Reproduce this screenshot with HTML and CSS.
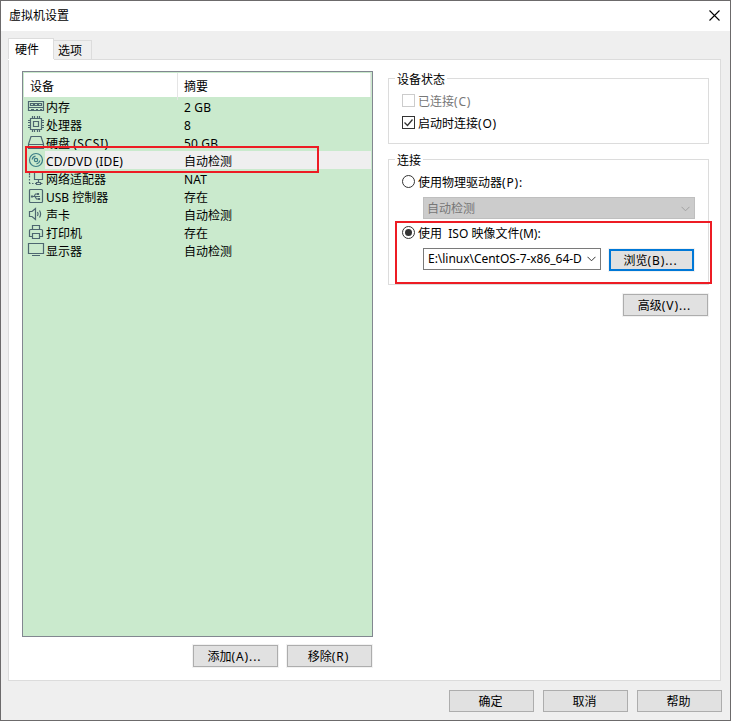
FILE: index.html
```html
<!DOCTYPE html>
<html lang="zh-CN">
<head>
<meta charset="utf-8">
<title>虚拟机设置</title>
<link rel="stylesheet" href="styles.css">
</head>
<body>
<div class="window">
  <header class="titlebar"><span>虚拟机设置</span>
    <svg class="close" width="11" height="11" viewBox="0 0 11 11"><path d="M.5.5l10 10M10.5.5l-10 10"/></svg>
  </header>
  <nav class="tabs"><div class="tab active">硬件</div><div class="tab">选项</div></nav>
  <main class="panel">
    <section class="left">
      <div class="list">
        <div class="head"><span>设备</span><span>摘要</span></div>
        <div class="row"><svg class="icon" viewBox="0 0 18 18"><path d="M1.500 4.500h15v9h-15zM3.500 6.500h3v2h-3zM7.500 6.500h3v2h-3zM11.500 6.500h3v2h-3zM2 10.500h14M4 12.500h3M9 12.500h2M13 12.500h2"/></svg><span class="name">内存</span><span class="w">2 GB</span></div>
        <div class="row"><svg class="icon" viewBox="0 0 18 18"><path d="M3.500 3.500h11v11h-11zM6.500 6.500h5v5h-5z"/><path d="M5.500 1v2M7.500 1v2M10.500 1v2M12.500 1v2M5.500 15v2M7.500 15v2M10.500 15v2M12.500 15v2M1 5.500h2M1 7.500h2M1 10.500h2M1 12.500h2M15 5.500h2M15 7.500h2M15 10.500h2M15 12.500h2"/></svg><span class="name">处理器</span><span>8</span></div>
        <div class="row"><svg class="icon" viewBox="0 0 18 18"><path d="M4 3.500h10l2.500 7.500v4.500h-15v-4.500zM1.500 11.500h15"/></svg><span class="name">硬盘 <i class="scsi">(SCSI)</i></span><span class="w">50 GB</span></div>
        <div class="row selected"><svg class="icon disc" viewBox="0 0 18 18"><circle cx="9" cy="9" r="6.500"/><circle cx="9" cy="9" r="1.700"/><path d="M5.200 8.500a4 4 0 0 1 3.300-3.300M12.800 9.500a4 4 0 0 1-3.300 3.300"/></svg><span class="name w">CD/DVD (IDE)</span><span>自动检测</span></div>
        <div class="row"><svg class="icon" viewBox="0 0 18 18"><path d="M7.500 3.500h8v7h-8zM11.500 11v2M9.500 13.500h4v2h-4z"/><path d="M7 3.500h-4.500v3"/><path stroke-dasharray="1.500 1.500" d="M2.500 7v7M2 14.500h7M14 14.500h3"/></svg><span class="name">网络适配器</span><span class="w">NAT</span></div>
        <div class="row"><svg class="icon" viewBox="0 0 18 18"><rect x="2.500" y="2.500" width="13" height="13" rx="1"/><path d="M5 9.500h8M7 9.500l1.500-2.500h2M8 9.500l1.500 2.500h2"/><path d="M4.500 9h1v1h-1zM10.500 6.500h1v1h-1zM11.500 11.500h1v1h-1z"/></svg><span class="name">USB 控制器</span><span>存在</span></div>
        <div class="row"><svg class="icon" viewBox="0 0 18 18"><path d="M2.500 6.500h2.500l3.500-3v11l-3.500-3h-2.500zM10.500 7q1.200 2 0 4M12.500 5.500q2.200 3.500 0 7"/></svg><span class="name">声卡</span><span>自动检测</span></div>
        <div class="row"><svg class="icon" viewBox="0 0 18 18"><path d="M5.500 6.500V2.500h7V6.500M5 13.500h-2.500v-6q0-1 1-1h11q1 0 1 1v6h-2.500M5.500 10.500h7v5h-7z"/></svg><span class="name">打印机</span><span>存在</span></div>
        <div class="row"><svg class="icon" viewBox="0 0 18 18"><path d="M1.500 2.500h15v10h-15zM5 14.500h8"/></svg><span class="name">显示器</span><span>自动检测</span></div>
      </div>
      <div class="actions"><button>添加<i>(A)...</i></button><button>移除<i>(R)</i></button></div>
    </section>
    <section class="right">
      <div class="group status">
        <span class="legend">设备状态</span>
        <div class="option disabled"><svg width="13" height="13"><rect x=".5" y=".5" width="12" height="12"/></svg><span>已连接<i class="o">(C)</i></span></div>
        <div class="option"><svg width="13" height="13"><rect x=".5" y=".5" width="12" height="12"/><path d="M2.500 6.500l3 3 5-6" stroke-width="1.300"/></svg><span>启动时连接<i class="o">(O)</i></span></div>
      </div>
      <div class="group connection">
        <span class="legend">连接</span>
        <div class="option"><svg width="13" height="13"><circle cx="6.500" cy="6.500" r="6"/></svg><span>使用物理驱动器<i class="o">(P):</i></span></div>
        <div class="combo off"><span>自动检测</span><svg width="9" height="6"><path d="M.5.8l4 4 4-4"/></svg></div>
        <div class="option iso"><svg width="13" height="13"><circle cx="6.500" cy="6.500" r="6"/><circle class="dot" cx="6.500" cy="6.500" r="3.500"/></svg><span>使用&nbsp; ISO 映像文件(M):</span></div>
        <div class="file"><div class="combo"><span class="path">E:\linux\CentOS-7-x86_64-D</span><svg width="9" height="6"><path d="M.5.8l4 4 4-4"/></svg></div><button class="focus">浏览<i>(B)...</i></button></div>
      </div>
      <button class="advanced">高级<i>(V)...</i></button>
    </section>
  </main>
  <footer class="footer"><button>确定</button><button>取消</button><button>帮助</button></footer>
  <div class="mark mark-device"></div>
  <div class="mark mark-iso"></div>
</div>
</body>
</html>
```
FILE: styles.css
```css
* { box-sizing: border-box; }
body { margin: 0; font: 12px/18px "Noto Sans", "Noto Sans CJK SC", sans-serif; color: #000; }
i { font-style: normal; }
.window { position: relative; width: 731px; height: 721px; border: 1px solid #6c6a6b; background: #efefef; overflow: hidden; display: flex; flex-direction: column; }
.titlebar { height: 30px; background: #fff; display: flex; align-items: center; justify-content: space-between; padding: 0 10px 0 8px; flex: none; }
svg { fill: none; stroke: #333; flex: none; }
.close { stroke: #000; stroke-width: 1.1; margin-top: -2px; }
.tabs { display: flex; align-items: flex-end; height: 28px; margin-left: 7px; flex: none; }
.tab { border: 1px solid #dcdcdc; border-left: 0; border-bottom: 0; width: 38px; height: 19px; padding: 1px 0 0 4px; }
.tab.active { position: relative; width: 46px; height: 21px; border-left: 1px solid #dcdcdc; padding: 2px 0 0 6px; background: #fff; box-shadow: 0 1px #fff; z-index: 1; }
.panel { width: 713px; height: 622px; margin-left: 7px; border: 1px solid #dcdcdc; background: #fff; display: flex; flex: none; padding: 11px 11px 0 13px; }
.left { width: 351px; }
.list { height: 566px; border: 1px solid #828790; background: #caeacd; padding: 1px; }
.head { display: grid; grid-template-columns: 153px 1fr; height: 24px; background: #fff; line-height: 27px; border-right: 1px solid #e5e5e5; }
.head span { padding-left: 6px; }
.head span + span { border-left: 1px solid #e5e5e5; }
.row { display: grid; grid-template-columns: 18px 139px 1fr; height: 18px; line-height: 21px; padding-left: 3px; white-space: nowrap; }
.row .icon { width: 18px; height: 18px; stroke: #4d6670; stroke-width: 1.2; }
.row .disc { stroke: #3d7d86; }
.row .name { padding-left: 1px; }
.row.selected { background: linear-gradient(to right, #caeacd 21px, #efefef 21px); }
.w { letter-spacing: .15px; }
.scsi { letter-spacing: .6px; }
.o { letter-spacing: .8px; }
button { width: 85px; height: 22px; border: 1px solid #adadad; background: #e1e1e1; padding: 1px 2px 0 0; font: inherit; line-height: 18px; color: #000; outline: 1px solid #f2f2f2; flex: none; }
button i { letter-spacing: .9px; }
.actions { display: flex; justify-content: flex-end; gap: 9px; margin: 8px 1px 0 0; }
.right { width: 321px; margin-left: 15px; padding-top: 7px; }
.group { position: relative; border: 1px solid #dcdcdc; padding-left: 13px; }
.legend { position: absolute; left: 6px; top: -8px; background: #fff; padding: 0 2px; }
.status { height: 66px; padding-top: 13px; }
.option { display: flex; align-items: center; gap: 3px; height: 18px; line-height: 20px; white-space: nowrap; }
.status .option svg { position: relative; top: -1px; }
.status .option + .option { margin-top: 4px; }
.disabled { color: #777; }
.disabled svg { stroke: #ccc; }
.connection { height: 126px; margin-top: 15px; padding-top: 13px; }
.connection .option svg { position: relative; top: -1px; }
.connection .option span, .status .option span { padding-top: 1px; }
.combo { display: flex; align-items: center; justify-content: space-between; width: 178px; height: 22px; border: 1px solid #7a7a7a; padding: 0 4px; background: #fff; line-height: 20px; }
.combo.off { width: 272px; margin: 6px 0 0 21px; background: #ccc; border-color: #bfbfbf; color: #777; padding: 2px 4px 0 3px; }
.off svg { stroke: #a0a0a0; }
.iso { margin-top: 5px; }
.dot { fill: #333; stroke: none; }
.file { display: flex; gap: 8px; margin: 6px 0 0 21px; }
.path { white-space: nowrap; letter-spacing: -.03px; }
.focus { border: 2px solid #0078d7; margin-top: 1px; }
.advanced { display: block; margin: 9px 0 0 235px; }
.footer { display: flex; justify-content: flex-end; gap: 9px; padding: 9px 8px 0 0; }
.footer button { outline: 0; }
.mark { position: absolute; border: 2px solid #ed1c24; }
.mark-device { left: 24px; top: 145px; width: 294px; height: 27px; }
.mark-iso { left: 394px; top: 220px; width: 317px; height: 63px; }
```
